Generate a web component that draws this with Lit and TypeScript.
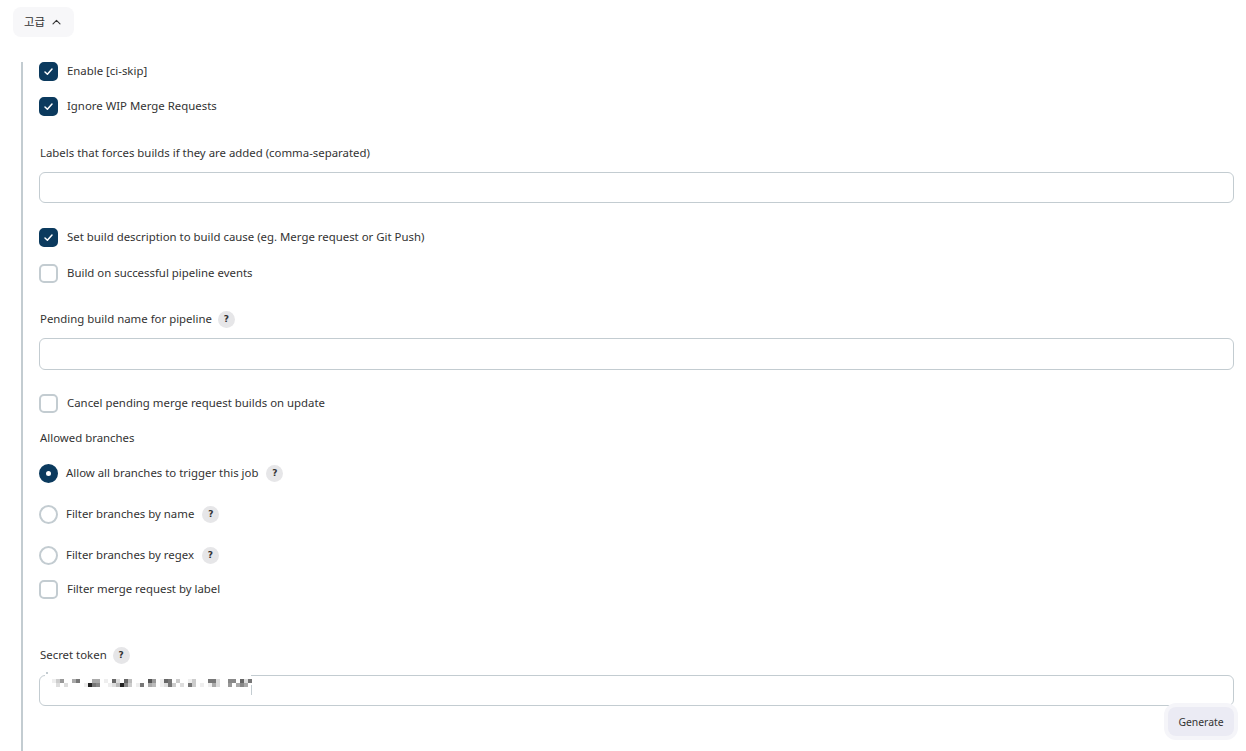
import { LitElement, css, html, svg } from "lit";
import { customElement } from "lit/decorators.js";

// blurred token, [x, colour] per 4px cell
const TOKEN_ROW_1: [number, string][] = [
  [52, "#eee"], [56, "#ccc"], [60, "#999"], [72, "#aaa"], [76, "#777"], [92, "#aaa"], [96, "#aaa"],
  [104, "#eee"], [112, "#666"], [116, "#ddd"], [124, "#666"], [128, "#bbb"], [148, "#555"], [152, "#999"],
  [160, "#eee"], [164, "#666"], [168, "#777"], [176, "#ccc"], [188, "#eee"], [192, "#ccc"], [208, "#777"],
  [212, "#777"], [216, "#ddd"], [228, "#888"], [232, "#888"], [240, "#666"], [244, "#ddd"], [248, "#777"],
];
const TOKEN_ROW_2: [number, string][] = [
  [56, "#ddd"], [64, "#ddd"], [84, "#eee"], [88, "#222"], [92, "#777"], [96, "#888"], [108, "#eee"],
  [112, "#ddd"], [116, "#bbb"], [120, "#222"], [124, "#888"], [128, "#ccc"], [136, "#eee"], [140, "#777"],
  [148, "#aaa"], [152, "#bbb"], [160, "#eee"], [164, "#ddd"], [168, "#777"], [172, "#ccc"], [180, "#ddd"],
  [188, "#777"], [192, "#ccc"], [200, "#eee"], [208, "#eee"], [212, "#aaa"], [216, "#ddd"], [228, "#999"],
  [236, "#aaa"], [240, "#888"], [244, "#aaa"],
];

@customElement("app-root")
export class AppRoot extends LitElement {
  static styles = css`
    :host {
      display: block;
      height: 751px;
      overflow: hidden;
      background: #fff;
      color: #333;
      font: 11.4px/17px "Noto Sans", "Noto Sans CJK KR", sans-serif;
    }

    .page {
      position: relative;
      padding: 7px 12px 0 13px;
    }

    .advanced {
      display: inline-flex;
      align-items: center;
      gap: 7px;
      height: 30px;
      padding: 0 13px 0 11px;
      border: 0;
      border-radius: 8px;
      background: #f7f7f9;
      color: #333;
      font: inherit;
    }

    .section {
      margin: 25px 0 0 8px;
      padding: 0 0 0 16px;
      border-left: 2px solid #c3ccd1;
      height: 689px;
      box-sizing: border-box;
    }

    .row {
      display: flex;
      align-items: center;
      height: 19px;
      gap: 9px;
    }

    .radio-row {
      gap: 8px;
    }

    .text {
      padding-bottom: 2px;
    }

    .box {
      box-sizing: border-box;
      width: 19px;
      height: 19px;
      border: 2px solid #c3ccd1;
      border-radius: 5px;
      display: grid;
      place-items: center;
      flex: none;
    }

    .box.on {
      background: #0b3a5e;
      border-color: #0b3a5e;
    }

    .dot {
      box-sizing: border-box;
      width: 19px;
      height: 19px;
      border: 2px solid #c3ccd1;
      border-radius: 50%;
      display: grid;
      place-items: center;
      flex: none;
    }

    .dot.on {
      background: #0b3a5e;
      border-color: #0b3a5e;
    }

    .dot.on::after {
      content: "";
      width: 5px;
      height: 5px;
      border-radius: 50%;
      background: #fff;
    }

    .help {
      width: 17px;
      height: 17px;
      border-radius: 50%;
      background: #e6e6e8;
      color: #333;
      font: 700 9px/17px "DejaVu Sans", sans-serif;
      text-align: center;
      flex: none;
    }

    .label {
      display: flex;
      align-items: center;
      gap: 6px;
      height: 19px;
      margin-left: 1px;
    }

    .input {
      display: block;
      box-sizing: border-box;
      width: 1195px;
      height: 32px;
      border: 1px solid #c3ccd1;
      border-radius: 6px;
      background: #fff;
    }

    .input.short {
      height: 31px;
    }

    .footer {
      display: flex;
      justify-content: flex-end;
      width: 1195px;
    }

    .generate {
      width: 66px;
      height: 29px;
      margin-top: 1px;
      padding: 2px 0 0;
      border: 0;
      border-radius: 8px;
      background: #ebebf4;
      box-shadow: 0 0 0 4px #f5f5f9;
      color: #333;
      font: 10.4px/17px "Noto Sans", sans-serif;
    }

    .mosaic {
      position: absolute;
      left: 0;
      top: 0;
      pointer-events: none;
    }

    .mt-9 { margin-top: 9px; }
    .mt-10 { margin-top: 10px; }
    .mt-15 { margin-top: 15px; }
    .mt-16 { margin-top: 16px; }
    .mt-17 { margin-top: 17px; }
    .mt-22 { margin-top: 22px; }
    .mt-24 { margin-top: 24px; }
    .mt-25 { margin-top: 25px; }
    .mt-27 { margin-top: 27px; }
    .mt-28 { margin-top: 28px; }
    .mt-47 { margin-top: 47px; }
  `;

  private check() {
    return html`<svg width="11" height="11" viewBox="0 0 11 11" fill="none">
      <path d="M2 6l2.4 2.2L9 3" stroke="#fff" stroke-width="1.5" stroke-linecap="round" stroke-linejoin="round" />
    </svg>`;
  }

  private checkbox(text: string, on: boolean, cls: string) {
    return html`<div class="row ${cls}">
      <span class="box ${on ? "on" : ""}">${on ? this.check() : ""}</span>
      <span class="text">${text}</span>
    </div>`;
  }

  private radio(text: string, on: boolean, cls: string) {
    return html`<div class="row radio-row ${cls}">
      <span class="dot ${on ? "on" : ""}"></span>
      <span class="text">${text}</span>
      <span class="help">?</span>
    </div>`;
  }

  render() {
    return html`<div class="page">
      <button class="advanced">
        <span class="text">고급</span>
        <svg width="9" height="6" viewBox="0 0 9 6" fill="none">
          <path d="M1 4.8l3.5-3.5L8 4.8" stroke="#333" stroke-width="1.1" stroke-linecap="round" stroke-linejoin="round" />
        </svg>
      </button>
      <div class="section">
        ${this.checkbox("Enable [ci-skip]", true, "")}
        ${this.checkbox("Ignore WIP Merge Requests", true, "mt-16")}
        <div class="label mt-28"><span class="text">Labels that forces builds if they are added (comma-separated)</span></div>
        <div class="input short mt-9"></div>
        ${this.checkbox("Set build description to build cause (eg. Merge request or Git Push)", true, "mt-25")}
        ${this.checkbox("Build on successful pipeline events", false, "mt-17")}
        <div class="label mt-27"><span class="text">Pending build name for pipeline</span> <span class="help">?</span></div>
        <div class="input mt-9"></div>
        ${this.checkbox("Cancel pending merge request builds on update", false, "mt-24")}
        <div class="label mt-16"><span class="text">Allowed branches</span></div>
        ${this.radio("Allow all branches to trigger this job", true, "mt-16")}
        ${this.radio("Filter branches by name", false, "mt-22")}
        ${this.radio("Filter branches by regex", false, "mt-22")}
        ${this.checkbox("Filter merge request by label", false, "mt-15")}
        <div class="label mt-47"><span class="text">Secret token</span> <span class="help">?</span></div>
        <div class="input short mt-10"></div>
        <div class="footer"><button class="generate">Generate</button></div>
      </div>
      <svg class="mosaic" width="300" height="751">
        <rect x="45" y="675" width="206" height="1" fill="#fff"></rect>
        <rect x="46" y="672" width="2" height="2" fill="#c3ccd1"></rect>
        <rect x="251" y="685" width="1" height="10" fill="#c3ccd1"></rect>
        ${TOKEN_ROW_1.map(([x, c]) => svg`<rect x=${x} y="679" width="4" height="4" fill=${c}></rect>`)}
        ${TOKEN_ROW_2.map(([x, c]) => svg`<rect x=${x} y="683" width="4" height="4" fill=${c}></rect>`)}
      </svg>
    </div>`;
  }
}
